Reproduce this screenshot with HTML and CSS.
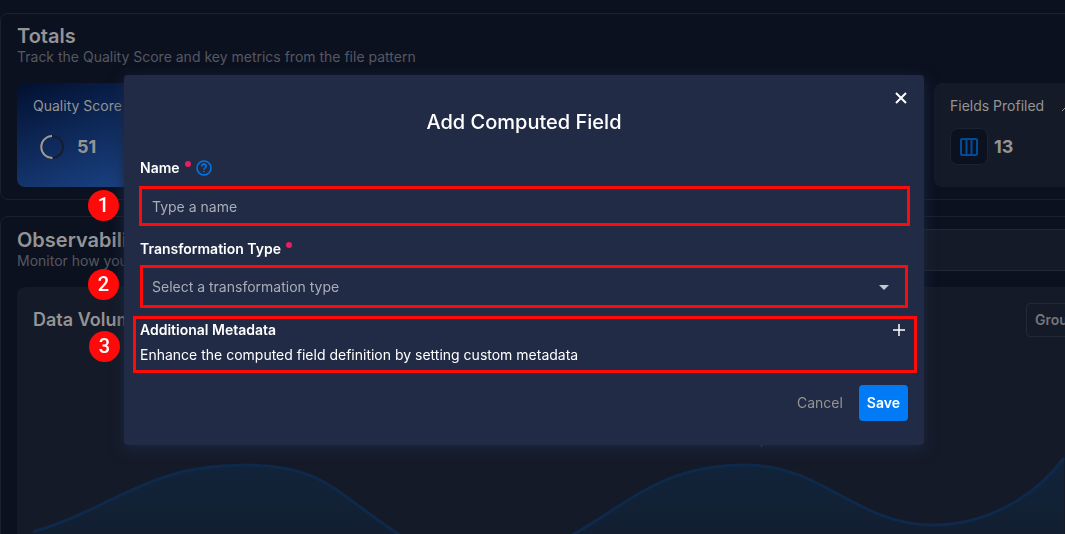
FILE: index.html
```html
<!DOCTYPE html>
<html lang="en">
<head>
<meta charset="utf-8">
<meta name="viewport" content="width=device-width, initial-scale=1">
<title>Add Computed Field</title>
<link rel="stylesheet" href="styles.css">
</head>
<body>
<main class="page">
  <section class="card">
    <h2 class="card-title">Totals</h2>
    <p class="card-subtitle">Track the Quality Score and key metrics from the file pattern</p>
    <div class="tiles">
      <article class="tile tile-score">
        <h3 class="tile-label">Quality Score</h3>
        <div class="tile-body tile-body-score">
          <svg class="ring" viewBox="0 0 24 24" aria-hidden="true"><circle cx="12" cy="12" r="11" stroke="#171d2e"/><path d="M12 1a11 11 0 0 0 0.5 22" stroke="#9b9a9a"/></svg>
          <span class="tile-value">51</span>
        </div>
      </article>
      <article class="tile tile-fields">
        <div class="tile-head">
          <h3 class="tile-label">Fields Profiled</h3>
          <svg class="trend" viewBox="0 0 16 16" aria-hidden="true"><path d="M1 11 9 3M4 3h5v5"/></svg>
        </div>
        <div class="tile-body">
          <span class="tile-icon"><svg viewBox="0 0 18 18" aria-hidden="true"><rect x="1" y="1" width="16" height="16" rx="1"/><path d="M6.500 1v16M11.500 1v16"/></svg></span>
          <span class="tile-value">13</span>
        </div>
      </article>
    </div>
  </section>
  <section class="card card-observability">
    <div class="card-head">
      <div>
        <h2 class="card-title">Observability</h2>
        <p class="card-subtitle">Monitor how your data</p>
      </div>
      <div class="toolbar"></div>
    </div>
    <div class="panel">
      <div class="panel-head">
        <h3 class="panel-title">Data Volume</h3>
        <button class="group-button" type="button">Group</button>
      </div>
      <p class="panel-note">Data volume is based on partition timeframe</p>
      <svg class="chart" viewBox="0 0 1032 90" preserveAspectRatio="none" aria-hidden="true">
        <defs><linearGradient id="area" x1="0" y1="0" x2="0" y2="1"><stop offset="0" stop-color="#11243b"/><stop offset="1" stop-color="#131d2e"/></linearGradient></defs>
        <path class="chart-area" d="M0 81C85 55 115 14 212 14C290 14 300 40 367 84C410 112 500 112 540 84C600 50 630 14 714 14C790 14 825 74 900 74C950 74 1000 50 1032 7V90H0Z"/>
        <path class="chart-line" d="M0 81C85 55 115 14 212 14C290 14 300 40 367 84C410 112 500 112 540 84C600 50 630 14 714 14C790 14 825 74 900 74C950 74 1000 50 1032 7"/>
      </svg>
    </div>
  </section>
</main>
<div class="overlay">
  <form class="modal" role="dialog" aria-modal="true" aria-labelledby="dialog-title">
    <button class="close" type="button" aria-label="Close"><svg viewBox="0 0 12 12" aria-hidden="true"><path d="M1 1 11 11M11 1 1 11"/></svg></button>
    <h1 class="modal-title" id="dialog-title">Add Computed Field</h1>
    <div class="field-head">
      <label class="label" for="name">Name</label>
      <span class="required"></span>
      <svg class="help" viewBox="0 0 16 16" aria-hidden="true"><circle cx="8" cy="8" r="7"/><path d="M5.800 6.500C5.800 3.300 10.200 3.400 10.200 6.200C10.200 7.800 8 7.800 8 9.700M8 11v1.300"/></svg>
    </div>
    <div class="callout callout-name">
      <span class="badge">1</span>
      <input class="control" id="name" type="text" placeholder="Type a name">
    </div>
    <div class="field-head field-head-type">
      <label class="label" for="type">Transformation Type</label>
      <span class="required"></span>
    </div>
    <div class="callout callout-type">
      <span class="badge">2</span>
      <select class="control" id="type"><option>Select a transformation type</option></select>
      <svg class="caret" viewBox="0 0 10 5" aria-hidden="true"><path d="M0 0h10L5 5Z"/></svg>
    </div>
    <section class="callout callout-metadata">
      <span class="badge">3</span>
      <div class="metadata-head">
        <h2 class="label">Additional Metadata</h2>
        <button class="add" type="button" aria-label="Add metadata"><svg viewBox="0 0 12 12" aria-hidden="true"><path d="M6 0v12M0 6h12"/></svg></button>
      </div>
      <p class="metadata-text">Enhance the computed field definition by setting custom metadata</p>
    </section>
    <div class="actions">
      <button class="cancel" type="button">Cancel</button>
      <button class="save" type="submit">Save</button>
    </div>
  </form>
</div>
</body>
</html>
```
FILE: styles.css
```css
* { box-sizing: border-box; }
body {
  margin: 0;
  height: 100vh;
  overflow: hidden;
  background: #0c1120;
  color: #949494;
  font: 14px/20px Inter, "Open Sans", sans-serif;
}
h1, h2, h3, p { margin: 0; }
button, input, select { font: inherit; color: inherit; margin: 0; padding: 0; border: 0; background: none; }
svg { display: block; flex: none; fill: none; }

.page { display: flex; flex-direction: column; gap: 16px; padding-top: 13px; height: 100%; }
.card {
  flex: none;
  margin-right: -16px;
  padding: 11px 16px 12px;
  border: 1px solid #1c2130;
  border-radius: 8px;
  background: #0c1120;
}
.card-title { font-size: 20px; line-height: 22px; font-weight: 600; }
.card-subtitle { color: #555861; }
.tiles { display: flex; justify-content: space-between; margin-top: 16px; }
.tile { height: 104px; padding: 13px 16px; border-radius: 8px; }
.tile-score { width: 288px; background: linear-gradient(160deg, #02102f 0%, #1c468b 75%); }
.tile-fields { width: 146px; margin-right: -16px; background: #151a28; }
.tile-head { display: flex; gap: 17px; }
.tile-label { font-size: 14px; line-height: 20px; font-weight: 400; white-space: nowrap; }
.trend { width: 16px; height: 16px; margin-top: 4px; stroke: #949494; }
.tile-body { display: flex; align-items: center; gap: 6px; height: 37px; margin-top: 12px; }
.tile-body-score { gap: 13px; padding-left: 7px; }
.tile-value { font-size: 18px; font-weight: 700; }
.ring { width: 24px; height: 24px; stroke-width: 2; }
.tile-icon {
  display: grid;
  place-items: center;
  width: 38px;
  height: 37px;
  border: 1px solid #1d2231;
  border-radius: 8px;
  background: #0c1120;
}
.tile-icon svg { width: 18px; height: 18px; stroke: #014b98; stroke-width: 2; }

.card-observability { padding-top: 12px; padding-bottom: 0; }
.card-head { display: flex; justify-content: space-between; height: 42px; }
.toolbar { width: 360px; margin-right: -16px; border: 1px solid #242937; background: #151a28; }
.panel {
  display: flex;
  flex-direction: column;
  margin: 16px -16px 0 0;
  padding: 16px 16px 0;
  border-radius: 8px 0 0 0;
  background: #151a28;
}
.panel-head { display: flex; justify-content: space-between; align-items: center; height: 34px; }
.panel-title { font-size: 18px; line-height: 22px; font-weight: 600; }
.group-button {
  height: 34px;
  width: 72px;
  padding-left: 8px;
  margin-right: -34px;
  border: 1px solid #242937;
  border-radius: 4px;
  color: #74767b;
  font-weight: 600;
  text-align: left;
}
.panel-note { margin: 92px 0 2px; padding-left: 382px; text-align: center; color: #6e7077; }
.chart { width: 100%; height: 90px; overflow: visible; }
.chart-area { fill: url(#area); }
.chart-line { stroke: #0e294a; stroke-width: 3; }

.overlay {
  position: fixed;
  inset: 0;
  display: grid;
  grid-template-columns: minmax(0, 800px);
  justify-content: center;
  align-content: center;
  padding: 0 17px 14px 0;
}
.modal {
  position: relative;
  padding: 32px 16px 24px;
  border-radius: 4px;
  background: #222b45;
  box-shadow: 0 4px 14px #1a2740;
  color: #fff;
}
.close { position: absolute; top: 11px; right: 11px; width: 24px; height: 24px; display: grid; place-items: center; }
.close svg { width: 12px; height: 12px; stroke: #fff; stroke-width: 2; }
.modal-title { margin-bottom: 21px; font-size: 20px; line-height: 30px; font-weight: 500; text-align: center; }
.field-head { display: flex; align-items: center; gap: 5px; height: 20px; margin-bottom: 8px; }
.field-head-type { margin: 13px 0 6px; }
.label { font-size: 14px; line-height: 20px; font-weight: 600; }
.required { align-self: flex-start; width: 6px; height: 6px; margin-top: 3px; border-radius: 50%; background: #e91e63; }
.help { width: 16px; height: 16px; stroke: #0078ea; stroke-width: 1.500; }
.callout { position: relative; border: 3px solid #ff0a0a; }
.callout-name { height: 40px; margin: 0 -2px 0 -1px; }
.callout-type { height: 43px; }
.callout-metadata { height: 57px; margin: 8px -9px 12px -7px; padding: 1px 5px 0 4px; }
.control { width: 100%; height: 100%; padding: 0 10px; color: #a9adb8; appearance: none; outline: 0; }
.control::placeholder { color: #a9adb8; opacity: 1; }
.callout-type .control { padding-left: 9px; }
.caret { position: absolute; top: 17px; right: 16px; width: 10px; height: 5px; fill: #c4c7cf; pointer-events: none; }
.badge {
  position: absolute;
  width: 31px;
  height: 31px;
  border-radius: 50%;
  background: #ff0a0a;
  color: #fff;
  font: 500 20px/31px Roboto, sans-serif;
  text-align: center;
}
.callout-name .badge { left: -54px; top: 1px; }
.callout-type .badge { left: -55px; top: 1px; }
.callout-metadata .badge { left: -47px; top: 12px; }
.metadata-head { display: flex; justify-content: space-between; align-items: center; height: 20px; }
.add { display: grid; place-items: center; width: 20px; height: 20px; }
.add svg { width: 12px; height: 12px; stroke: #fff; stroke-width: 1.500; }
.metadata-text { margin-top: 5px; }
.actions { display: flex; justify-content: flex-end; gap: 8px; }
.cancel, .save { height: 36px; padding: 0 8px; border-radius: 4px; }
.cancel { color: #949494; }
.save { background: #007bf5; font-weight: 600; }
```
